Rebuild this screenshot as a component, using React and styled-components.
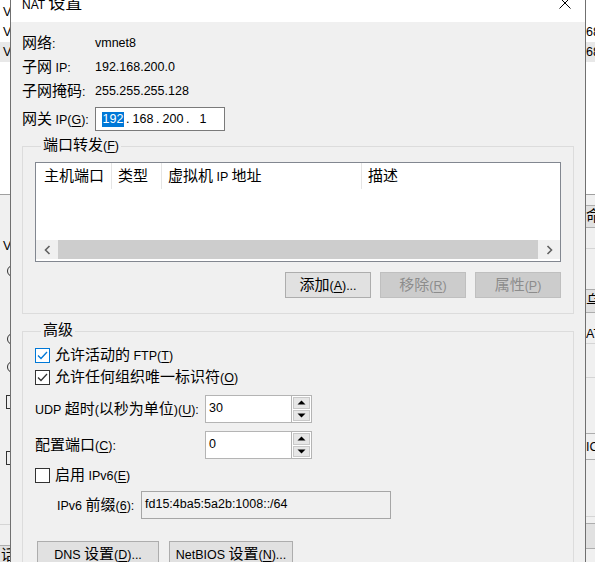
import React from 'react';
import styled, { createGlobalStyle } from 'styled-components';

const GlobalStyle = createGlobalStyle`
  html, body {
    margin: 0;
    padding: 0;
  }
  body {
    width: 595px;
    height: 562px;
    overflow: hidden;
    background: #f0f0f0;
    color: #000;
    font-family: "Liberation Sans", "Noto Sans CJK SC", sans-serif;
    font-size: 12.5px;
  }
`;

// CJK runs get their own (larger) font, like the Windows font linking does
const HAN = /([\u2e80-\u9fff\uf900-\ufaff]+)/;

const Han = styled.span`
  font-family: "Noto Sans CJK SC", sans-serif;
  font-size: ${(p) => p.$size || 15}px;
  line-height: 12px;
`;

const Key = styled.span`
  text-decoration: underline;
  text-underline-offset: 2px;
`;

function Text({ children, han }) {
  const parts = String(children).split(/(&.)/);
  return (
    <span>
      {parts.flatMap((part, i) => {
        if (part.length === 2 && part[0] === '&') return [<Key key={i}>{part[1]}</Key>];
        return part
          .split(HAN)
          .filter(Boolean)
          .map((seg, j) =>
            HAN.test(seg) ? (
              <Han key={`${i}-${j}`} $size={han}>
                {seg}
              </Han>
            ) : (
              <React.Fragment key={`${i}-${j}`}>{seg}</React.Fragment>
            )
          );
      })}
    </span>
  );
}

/* ---------- desktop behind the dialog ---------- */

const Desktop = styled.div`
  position: relative;
  width: 595px;
  height: 562px;
  overflow: hidden;
  background: #f0f0f0;
`;

const BackWindow = styled.div`
  position: absolute;
  top: 0;
  bottom: 0;
  left: ${(p) => p.$left}px;
  width: ${(p) => p.$width}px;
  display: flex;
  flex-direction: column;
  overflow: hidden;
  background: #f0f0f0;
`;

const ListPane = styled.div`
  height: 195px;
  flex: none;
  background: #fff;
  padding-top: 2px;
  box-sizing: border-box;
  border-bottom: 1px solid #a0a0a0;
`;

const PaneRow = styled.div`
  height: 20px;
  line-height: 20px;
  white-space: nowrap;
  padding-left: ${(p) => p.$pad || 0}px;
  background: ${(p) => (p.$hl ? '#e8e8e8' : 'transparent')};
`;

const Slot = styled.div`
  height: ${(p) => p.$h}px;
  flex: none;
  display: flex;
  align-items: center;
  white-space: nowrap;
  padding-left: ${(p) => p.$pad || 0}px;
  box-sizing: border-box;
  background: ${(p) => p.$bg || 'transparent'};
  border-top: ${(p) => (p.$edge ? '1px solid #adadad' : 'none')};
  border-bottom: ${(p) => (p.$edge ? '1px solid #adadad' : 'none')};
`;

const Rule = styled.div`
  height: 1px;
  flex: none;
  background: ${(p) => p.$c || '#d5d5d5'};
`;

const RadioEdge = styled.span`
  width: 12px;
  height: 12px;
  flex: none;
  border: 1px solid #333;
  border-radius: 50%;
  box-sizing: border-box;
`;

const BoxEdge = styled.span`
  width: 14px;
  height: 14px;
  flex: none;
  border: 1px solid #333;
  box-sizing: border-box;
`;

/* ---------- dialog ---------- */

const Dialog = styled.div`
  position: absolute;
  left: 10px;
  top: -12px;
  width: 576px;
  height: 620px;
  box-sizing: border-box;
  border: 1px solid #707070;
  background: #f0f0f0;
  display: flex;
  flex-direction: column;
`;

const TitleBar = styled.div`
  height: 33px;
  flex: none;
  background: #fff;
  display: flex;
  align-items: flex-start;
  padding-left: 11px;
`;

const Title = styled.div`
  flex: 1;
  padding-top: 6px;
  line-height: 20px;
  font-size: 12px;
  white-space: nowrap;
`;

const CloseBtn = styled.div`
  width: 40px;
  padding-top: 8px;
  display: flex;
  justify-content: center;
`;

const Body = styled.div`
  padding: 9px 11px 0;
  display: flex;
  flex-direction: column;
`;

const InfoRow = styled.div`
  display: flex;
  align-items: center;
  height: 24px;
  margin-top: ${(p) => p.$top || 0}px;
  white-space: nowrap;
`;

const InfoLabel = styled.div`
  width: 73px;
  flex: none;
`;

const IpBox = styled.div`
  width: 130px;
  height: 24px;
  box-sizing: border-box;
  border: 1px solid #7a7a7a;
  background: #fff;
  display: flex;
  align-items: center;
  padding-left: 6px;
`;

const Octet = styled.span`
  width: 22px;
  text-align: center;
  line-height: 15px;
  background: ${(p) => (p.$sel ? '#0078d7' : 'transparent')};
  color: ${(p) => (p.$sel ? '#fff' : '#000')};
`;

const Dot = styled.span`
  width: 8px;
  text-align: left;
  padding-left: 2px;
  box-sizing: border-box;
`;

const Group = styled.fieldset`
  margin: ${(p) => p.$top}px 0 0;
  padding: 0 12px ${(p) => p.$bottom}px;
  border: 1px solid #dcdcdc;
  min-width: 0;
  display: flex;
  flex-direction: column;
`;

const Legend = styled.legend`
  margin-left: 6px;
  padding: 0 2px;
  height: 16px;
  line-height: 16px;
  white-space: nowrap;
`;

const ListView = styled.div`
  margin-top: 8px;
  height: 100px;
  box-sizing: border-box;
  border: 1px solid #828790;
  background: #fff;
  display: flex;
  flex-direction: column;
`;

const Header = styled.div`
  display: flex;
  height: 26px;
  flex: none;
`;

const HeaderCell = styled.div`
  width: ${(p) => (p.$w ? `${p.$w}px` : 'auto')};
  flex: ${(p) => (p.$w ? 'none' : 1)};
  box-sizing: border-box;
  padding-left: ${(p) => p.$pad}px;
  border-right: ${(p) => (p.$w ? '1px solid #e5e5e5' : 'none')};
  display: flex;
  align-items: center;
  white-space: nowrap;
`;

const ListFill = styled.div`
  flex: 1;
`;

const ScrollBar = styled.div`
  height: 19px;
  margin-bottom: 2px;
  flex: none;
  display: flex;
  background: #f0f0f0;
`;

const ScrollArrow = styled.div`
  width: 22px;
  flex: none;
  display: flex;
  align-items: center;
  justify-content: center;
`;

const ScrollThumb = styled.div`
  flex: 1;
  background: #cdcdcd;
`;

const ButtonRow = styled.div`
  display: flex;
  justify-content: ${(p) => (p.$end ? 'flex-end' : 'flex-start')};
  gap: ${(p) => p.$gap}px;
  margin-top: ${(p) => p.$top}px;
  padding-left: ${(p) => p.$pad || 0}px;
`;

const Button = styled.div`
  width: ${(p) => p.$w}px;
  height: 26px;
  box-sizing: border-box;
  border: 1px solid ${(p) => (p.$disabled ? '#bfbfbf' : '#adadad')};
  background: ${(p) => (p.$disabled ? '#cccccc' : '#e1e1e1')};
  color: ${(p) => (p.$disabled ? '#8c8c8c' : '#000')};
  display: flex;
  align-items: center;
  justify-content: center;
  white-space: nowrap;
`;

const CheckRow = styled.div`
  display: flex;
  align-items: center;
  height: 22px;
  margin-top: ${(p) => p.$top || 0}px;
  white-space: nowrap;
`;

const CheckBox = styled.span`
  width: 15px;
  height: 15px;
  flex: none;
  box-sizing: border-box;
  border: 1px solid ${(p) => p.$color};
  background: #fff;
  margin-right: 5px;
  display: flex;
  align-items: center;
  justify-content: center;
`;

const FieldRow = styled.div`
  display: flex;
  align-items: center;
  height: 28px;
  margin-top: ${(p) => p.$top || 0}px;
  padding-left: ${(p) => p.$pad || 0}px;
  white-space: nowrap;
`;

const FieldLabel = styled.div`
  width: ${(p) => p.$w}px;
  flex: none;
`;

const Spin = styled.div`
  width: 107px;
  height: 28px;
  box-sizing: border-box;
  border: 1px solid #b4b4b4;
  background: #fff;
  display: flex;
`;

const SpinText = styled.div`
  flex: 1;
  padding: 4px 0 0 3px;
  line-height: 16px;
`;

const SpinBtns = styled.div`
  width: 20px;
  flex: none;
  display: flex;
  flex-direction: column;
  gap: 1px;
  padding: 1px;
  box-sizing: border-box;
  border-left: 1px solid #b4b4b4;
`;

const SpinBtn = styled.div`
  flex: 1;
  background: #e6e6e6;
  border: 1px solid #c8c8c8;
  display: flex;
  align-items: center;
  justify-content: center;
`;

const PrefixBox = styled.div`
  width: 250px;
  height: 28px;
  box-sizing: border-box;
  border: 1px solid #a6a6a6;
  background: #f0f0f0;
  padding: 4px 0 0 3px;
  line-height: 16px;
`;

const Check = ({ color }) => (
  <svg width="11" height="9" viewBox="0 0 11 9">
    <path d="M1 4.5 L4 7.5 L10 1" fill="none" stroke={color} strokeWidth="1.3" />
  </svg>
);

const Chevron = ({ dir }) => (
  <svg width="7" height="10" viewBox="0 0 7 10">
    <path
      d={dir === 'left' ? 'M5.5 1 L1.5 5 L5.5 9' : 'M1.5 1 L5.5 5 L1.5 9'}
      fill="none"
      stroke="#606060"
      strokeWidth="1.6"
    />
  </svg>
);

const Tri = ({ up }) => (
  <svg width="9" height="5" viewBox="0 0 9 5">
    <path d={up ? 'M0.5 4.5 L4.5 0.5 L8.5 4.5 Z' : 'M0.5 0.5 L8.5 0.5 L4.5 4.5 Z'} fill="#000" />
  </svg>
);

const SpinBox = ({ value }) => (
  <Spin>
    <SpinText>{value}</SpinText>
    <SpinBtns>
      <SpinBtn>
        <Tri up />
      </SpinBtn>
      <SpinBtn>
        <Tri />
      </SpinBtn>
    </SpinBtns>
  </Spin>
);

const info = [
  ['网络:', 'vmnet8'],
  ['子网 IP:', '192.168.200.0'],
  ['子网掩码:', '255.255.255.128'],
];

const columns = [
  { label: '主机端口', w: 76, pad: 8 },
  { label: '类型', w: 50, pad: 6 },
  { label: '虚拟机 IP 地址', w: 200, pad: 6 },
  { label: '描述', pad: 6 },
];

function LeftBehind() {
  return (
    <BackWindow $left={0} $width={10}>
      <ListPane>
        <PaneRow $pad={3}>V</PaneRow>
        <PaneRow $pad={3}>V</PaneRow>
        <PaneRow $pad={3} $hl>
          V
        </PaneRow>
      </ListPane>
      <Slot $h={41} />
      <Slot $h={20} $pad={3}>
        V
      </Slot>
      <Slot $h={8} />
      <Slot $h={14} $pad={7}>
        <RadioEdge />
      </Slot>
      <Slot $h={54} />
      <Slot $h={14} $pad={7}>
        <RadioEdge />
      </Slot>
      <Slot $h={14} />
      <Slot $h={14} $pad={7}>
        <RadioEdge />
      </Slot>
      <Slot $h={20} />
      <Slot $h={16} $pad={6}>
        <BoxEdge />
      </Slot>
      <Slot $h={40} />
      <Slot $h={16} $pad={6}>
        <BoxEdge />
      </Slot>
      <Slot $h={58} />
      <Rule />
      <Slot $h={20} />
      <Slot $h={20} $pad={1} $edge $bg="#e1e1e1">
        <Text>话</Text>
      </Slot>
    </BackWindow>
  );
}

function RightBehind() {
  return (
    <BackWindow $left={586} $width={9}>
      <ListPane>
        <PaneRow />
        <PaneRow>68</PaneRow>
        <PaneRow $hl>68</PaneRow>
      </ListPane>
      <Slot $h={10} />
      <Slot $h={23} $edge $bg="#e1e1e1">
        <Text>命</Text>
      </Slot>
      <Slot $h={20} />
      <Rule />
      <Slot $h={40} />
      <Slot $h={24} $edge $bg="#e1e1e1">
        <Text>乌</Text>
      </Slot>
      <Slot $h={12} />
      <Slot $h={18}>AT</Slot>
      <Rule />
      <Slot $h={33} />
      <Rule />
      <Slot $h={55} />
      <Slot $h={27} $edge>
        IC
      </Slot>
      <Slot $h={56} />
      <Rule />
      <Slot $h={6} />
      <Slot $h={26} $edge $bg="#e1e1e1" />
    </BackWindow>
  );
}

export default function App() {
  return (
    <Desktop>
      <GlobalStyle />
      <LeftBehind />
      <RightBehind />
      <Dialog>
        <TitleBar>
          <Title>
            <Text han={17}>NAT 设置</Text>
          </Title>
          <CloseBtn>
            <svg width="12" height="12" viewBox="0 0 12 12">
              <path d="M0.5 0.5 L11.5 11.5 M11.5 0.5 L0.5 11.5" stroke="#000" strokeWidth="1" />
            </svg>
          </CloseBtn>
        </TitleBar>
        <Body>
          {info.map(([label, value]) => (
            <InfoRow key={label}>
              <InfoLabel>
                <Text>{label}</Text>
              </InfoLabel>
              {value}
            </InfoRow>
          ))}
          <InfoRow $top={4}>
            <InfoLabel>
              <Text>网关 IP(&G):</Text>
            </InfoLabel>
            <IpBox>
              <Octet $sel>192</Octet>
              <Dot>.</Dot>
              <Octet>168</Octet>
              <Dot>.</Dot>
              <Octet>200</Octet>
              <Dot>.</Dot>
              <Octet>1</Octet>
            </IpBox>
          </InfoRow>

          <Group $top={7} $bottom={15}>
            <Legend>
              <Text>端口转发(&F)</Text>
            </Legend>
            <ListView>
              <Header>
                {columns.map((c) => (
                  <HeaderCell key={c.label} $w={c.w} $pad={c.pad}>
                    <Text>{c.label}</Text>
                  </HeaderCell>
                ))}
              </Header>
              <ListFill />
              <ScrollBar>
                <ScrollArrow>
                  <Chevron dir="left" />
                </ScrollArrow>
                <ScrollThumb />
                <ScrollArrow>
                  <Chevron dir="right" />
                </ScrollArrow>
              </ScrollBar>
            </ListView>
            <ButtonRow $end $gap={9} $top={10}>
              <Button $w={86}>
                <Text>添加(&A)...</Text>
              </Button>
              <Button $w={86} $disabled>
                <Text>移除(&R)</Text>
              </Button>
              <Button $w={86} $disabled>
                <Text>属性(&P)</Text>
              </Button>
            </ButtonRow>
          </Group>

          <Group $top={9} $bottom={14}>
            <Legend>
              <Text>高级</Text>
            </Legend>
            <CheckRow $top={5}>
              <CheckBox $color="#0078d7">
                <Check color="#0078d7" />
              </CheckBox>
              <Text>允许活动的 FTP(&T)</Text>
            </CheckRow>
            <CheckRow>
              <CheckBox $color="#333">
                <Check color="#333" />
              </CheckBox>
              <Text>允许任何组织唯一标识符(&O)</Text>
            </CheckRow>
            <FieldRow $top={7}>
              <FieldLabel $w={170}>
                <Text>UDP 超时(以秒为单位)(&U):</Text>
              </FieldLabel>
              <SpinBox value="30" />
            </FieldRow>
            <FieldRow $top={8}>
              <FieldLabel $w={170}>
                <Text>配置端口(&C):</Text>
              </FieldLabel>
              <SpinBox value="0" />
            </FieldRow>
            <CheckRow $top={5}>
              <CheckBox $color="#333" />
              <Text>启用 IPv6(&E)</Text>
            </CheckRow>
            <FieldRow $top={5} $pad={22}>
              <FieldLabel $w={84}>
                <Text>IPv6 前缀(&6):</Text>
              </FieldLabel>
              <PrefixBox>fd15:4ba5:5a2b:1008::/64</PrefixBox>
            </FieldRow>
            <ButtonRow $gap={10} $top={22} $pad={2}>
              <Button $w={122}>
                <Text>DNS 设置(&D)...</Text>
              </Button>
              <Button $w={124}>
                <Text>NetBIOS 设置(&N)...</Text>
              </Button>
            </ButtonRow>
          </Group>
        </Body>
      </Dialog>
    </Desktop>
  );
}
